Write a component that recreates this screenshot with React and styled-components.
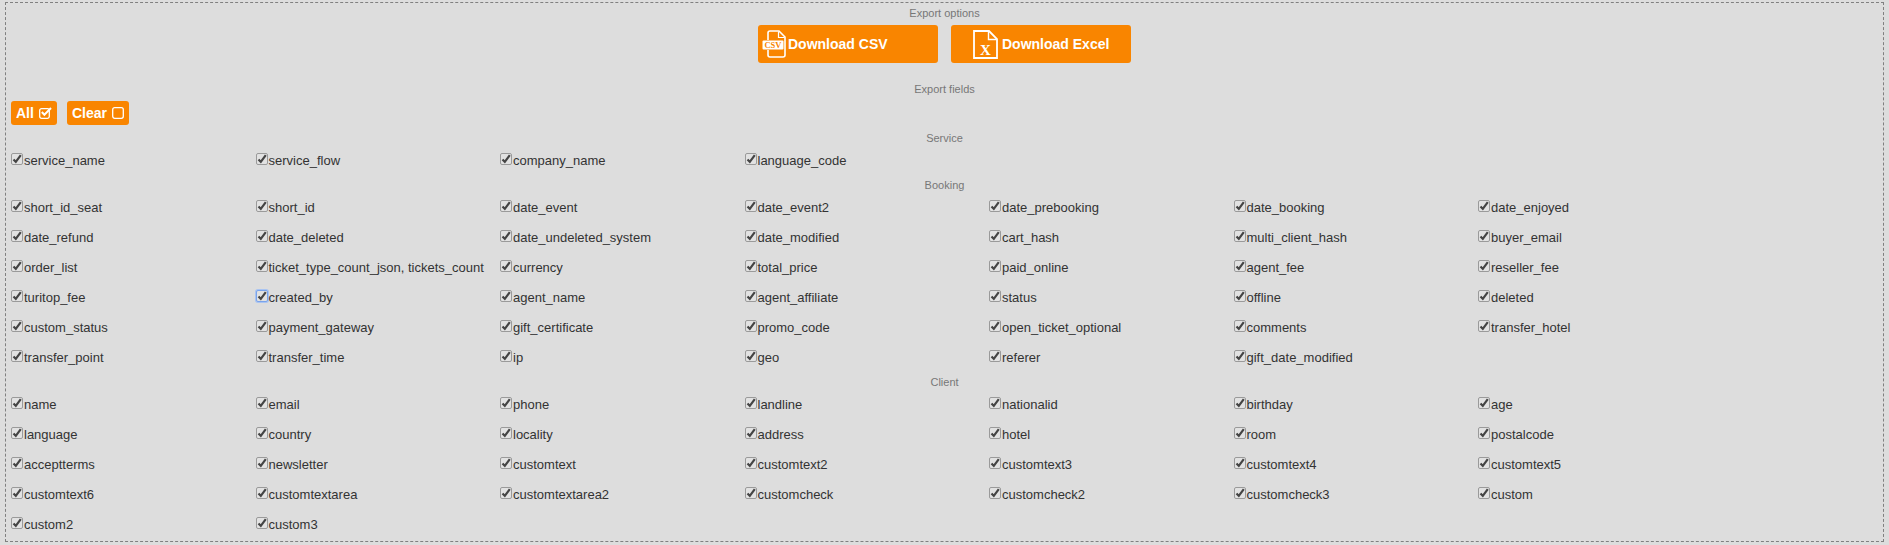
import React from 'react';
import styled, { createGlobalStyle } from 'styled-components';

const GlobalStyle = createGlobalStyle`
    html, body {
        margin: 0;
        padding: 0;
        background: #ddd;
    }
    body {
        font-family: "Liberation Sans", Arial, sans-serif;
        overflow: hidden;
    }
`;

const Panel = styled.div`
    box-sizing: border-box;
    width: 1879px;
    height: 540px;
    margin: 2px 0 0 5px;
    border: 1px dashed #808080;
    padding: 4px 5px 0;
`;

const Legend = styled.div`
    font-size: 11px;
    line-height: 13px;
    color: #777;
    text-align: center;
`;

const Downloads = styled.div`
    display: flex;
    justify-content: center;
    gap: 13px;
    margin-top: 5px;
    margin-bottom: 20px;
`;

const DownloadButton = styled.a`
    box-sizing: border-box;
    width: 180px;
    height: 38px;
    display: flex;
    align-items: center;
    gap: ${(props) => props.$gap}px;
    padding-left: ${(props) => props.$indent}px;
    background: #f98500;
    border-radius: 3px;
    color: #fff;
    font-size: 14px;
    font-weight: bold;
    white-space: nowrap;
    cursor: pointer;
`;

const ToggleRow = styled.div`
    display: flex;
    gap: 10px;
    margin-top: 5px;
    margin-bottom: 7px;
`;

const ToggleButton = styled.a`
    height: 24px;
    display: flex;
    align-items: center;
    gap: 5px;
    padding: 0 5px;
    background: #f98500;
    border-radius: 3px;
    color: #fff;
    font-size: 14px;
    font-weight: bold;
`;

const Section = styled.div`
    margin-top: 4px;
`;

const FieldGrid = styled.div`
    display: grid;
    grid-template-columns: repeat(7, 244.5px);
    grid-auto-rows: 30px;
`;

const Field = styled.label`
    display: flex;
    align-items: center;
    font-size: 13px;
    color: #333;
    white-space: nowrap;
`;

const Box = styled.span`
    box-sizing: border-box;
    width: 12px;
    height: 12px;
    margin-right: 1px;
    margin-top: -2px;
    flex: none;
    display: flex;
    align-items: center;
    justify-content: center;
    background: #e2e2e2;
    border: 1px solid ${(props) => (props.$focused ? '#7aa3ea' : '#9a9a9a')};
    border-radius: 2px;
    box-shadow: ${(props) => (props.$focused ? '0 0 0 1px #a9c4f2' : 'none')};
`;

const CheckMark = () => (
    <svg width="10" height="10" viewBox="0 0 10 10">
        <path d="M1.5 5.5 L3.8 7.8 L8.8 1.2" fill="none" stroke="#444" strokeWidth="2.2" />
    </svg>
);

const CsvIcon = () => (
    <svg width="24" height="28" viewBox="0 0 24 28">
        <path d="M6 10 V3 Q6 1 8 1 H17 L23 7 V25 Q23 27 21 27 H8 Q6 27 6 25 V20" fill="none" stroke="#fff" strokeWidth="1.6" />
        <path d="M16.5 1.5 V7.5 H22.5" fill="none" stroke="#fff" strokeWidth="1.2" />
        <rect x="0.5" y="10.5" width="21" height="9" rx="1" fill="#fff" />
        <text x="11" y="18" fontSize="8.5" fontWeight="bold" fontFamily="'Liberation Serif', serif" fill="#f98500" textAnchor="middle">CSV</text>
    </svg>
);

const ExcelIcon = () => (
    <svg width="25" height="29" viewBox="0 0 25 29">
        <path d="M1 1 H16 L24 9 V28 H1 Z" fill="none" stroke="#fff" strokeWidth="1.8" />
        <path d="M15.5 1.5 V9.5 H23.5" fill="none" stroke="#fff" strokeWidth="1.4" />
        <text x="12.5" y="25" fontSize="15" fontWeight="bold" fontFamily="'Liberation Serif', serif" fill="#fff" textAnchor="middle">X</text>
    </svg>
);

const AllIcon = () => (
    <svg width="13" height="12" viewBox="0 0 13 12">
        <rect x="0.7" y="1.7" width="9.6" height="9.6" rx="1.8" fill="none" stroke="#fff" strokeWidth="1.3" />
        <path d="M2.8 5 L5.4 7.8 L12 1" fill="none" stroke="#fff" strokeWidth="2" />
    </svg>
);

const ClearIcon = () => (
    <svg width="12" height="12" viewBox="0 0 12 12">
        <rect x="0.7" y="0.7" width="10.6" height="10.6" rx="2" fill="none" stroke="#fff" strokeWidth="1.3" />
    </svg>
);

const service = ['service_name', 'service_flow', 'company_name', 'language_code'];

const booking = [
    'short_id_seat', 'short_id', 'date_event', 'date_event2', 'date_prebooking', 'date_booking', 'date_enjoyed',
    'date_refund', 'date_deleted', 'date_undeleted_system', 'date_modified', 'cart_hash', 'multi_client_hash', 'buyer_email',
    'order_list', 'ticket_type_count_json, tickets_count', 'currency', 'total_price', 'paid_online', 'agent_fee', 'reseller_fee',
    'turitop_fee', 'created_by', 'agent_name', 'agent_affiliate', 'status', 'offline', 'deleted',
    'custom_status', 'payment_gateway', 'gift_certificate', 'promo_code', 'open_ticket_optional', 'comments', 'transfer_hotel',
    'transfer_point', 'transfer_time', 'ip', 'geo', 'referer', 'gift_date_modified',
];

const client = [
    'name', 'email', 'phone', 'landline', 'nationalid', 'birthday', 'age',
    'language', 'country', 'locality', 'address', 'hotel', 'room', 'postalcode',
    'acceptterms', 'newsletter', 'customtext', 'customtext2', 'customtext3', 'customtext4', 'customtext5',
    'customtext6', 'customtextarea', 'customtextarea2', 'customcheck', 'customcheck2', 'customcheck3', 'custom',
    'custom2', 'custom3',
];

function Fields({ names }) {
    return (
        <FieldGrid>
            {names.map((name) => (
                <Field key={name}>
                    <Box $focused={name === 'created_by'}><CheckMark /></Box>
                    {name}
                </Field>
            ))}
        </FieldGrid>
    );
}

export default function App() {
    return (
        <>
            <GlobalStyle />
            <Panel>
                <Legend>Export options</Legend>
                <Downloads>
                    <DownloadButton $indent={4} $gap={2}><CsvIcon />Download CSV</DownloadButton>
                    <DownloadButton $indent={22} $gap={4}><ExcelIcon />Download Excel</DownloadButton>
                </Downloads>
                <Legend>Export fields</Legend>
                <ToggleRow>
                    <ToggleButton>All<AllIcon /></ToggleButton>
                    <ToggleButton>Clear<ClearIcon /></ToggleButton>
                </ToggleRow>
                <Section>
                    <Legend>Service</Legend>
                    <Fields names={service} />
                </Section>
                <Section>
                    <Legend>Booking</Legend>
                    <Fields names={booking} />
                </Section>
                <Section>
                    <Legend>Client</Legend>
                    <Fields names={client} />
                </Section>
            </Panel>
        </>
    );
}
